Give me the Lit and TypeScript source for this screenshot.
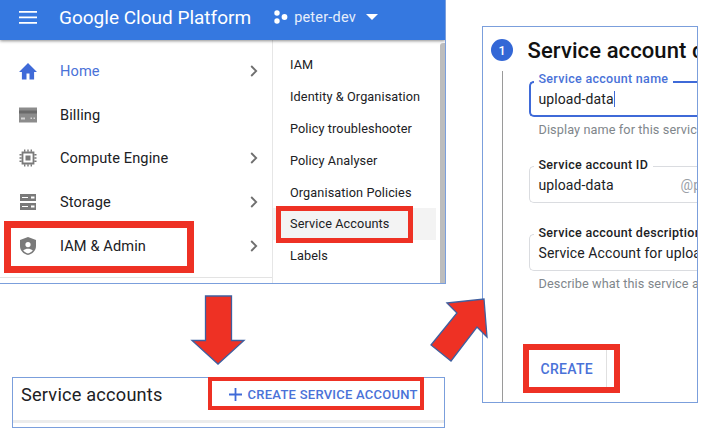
import { LitElement, html, css, svg } from 'lit';
import { customElement } from 'lit/decorators.js';

const GREY = '#7a7a7a';

const icons: Record<string, unknown> = {
  home: svg`<path fill="#3f6ad8" d="M7.500 17.500v-6h3v6h4.600v-7.500h2.900L9 1 0 10h2.900v7.500z"/>`,
  billing: svg`<path fill="#8c8c8c" d="M0 1.500h18v15H0z"/><path fill="#6a6a6a" d="M0 4.500h18v3H0z"/><path fill="#d4d4d4" d="M2 11.500h4v2H2zM11.500 11.500h1.500v1.500h-1.500zM14.500 11.500H16v1.500h-1.500z"/>`,
  compute: svg`<path fill="none" stroke="${GREY}" stroke-width="1.800" d="M3.500 3.500h11v11h-11z"/><path fill="${GREY}" d="M6.500 6.500h5v5h-5zM.5 5h2.200v1.400H.5zM.5 8.300h2.200v1.400H.5zM.5 11.600h2.200V13H.5zM15.300 5h2.200v1.400h-2.200zM15.300 8.300h2.200v1.400h-2.200zM15.300 11.600h2.200V13h-2.200zM5 .5h1.400v2.200H5zM8.300 .5h1.400v2.200H8.300zM11.600 .5H13v2.200h-1.400zM5 15.300h1.400v2.200H5zM8.300 15.300h1.400v2.200H8.300zM11.600 15.300H13v2.200h-1.400z"/>`,
  storage: svg`<path fill="${GREY}" fill-rule="evenodd" d="M1 1h16v7H1zM12 3.500v2h3.500v-2zM1 10h16v7H1zM12 12.500v2h3.500v-2zM3 4h6v1H3zM3 13h6v1H3z"/>`,
  iam: svg`<path fill="${GREY}" fill-rule="evenodd" d="M9 0l8 3v6c0 4.500-3.400 8-8 9-4.600-1-8-4.500-8-9V3zM9 5a2.600 2.600 0 1 0 0 5.200A2.600 2.600 0 0 0 9 5zM4.200 13.300C5.400 15 7 16 9 16.500c2-.5 3.600-1.500 4.800-3.200C12.500 12.200 10.800 11.700 9 11.700s-3.500.5-4.800 1.600z"/>`,
};

const menu = [
  { icon: 'home', label: 'Home', arrow: true, active: true },
  { icon: 'billing', label: 'Billing', arrow: false },
  { icon: 'compute', label: 'Compute Engine', arrow: true },
  { icon: 'storage', label: 'Storage', arrow: true },
  { icon: 'iam', label: 'IAM & Admin', arrow: true },
];

const submenu = [
  'IAM',
  'Identity & Organisation',
  'Policy troubleshooter',
  'Policy Analyser',
  'Organisation Policies',
  'Service Accounts',
  'Labels',
];

@customElement('app-root')
export class AppRoot extends LitElement {
  static styles = css`
    :host {
      display: block;
      position: relative;
      width: 703px;
      height: 432px;
      overflow: hidden;
      background: #fff;
      font-family: Roboto, 'Liberation Sans', sans-serif;
      color: #202124;
    }
    /* the figure is a free canvas: three screenshots with arrows and marks over them */
    .panel {
      position: absolute;
      box-sizing: border-box;
      background: #fff;
      overflow: hidden;
    }
    .console {
      left: 0;
      top: 0;
      width: 446px;
      height: 284px;
      border-right: 1.500px solid #7b9fdc;
      border-bottom: 1.500px solid #7b9fdc;
      display: flex;
      flex-direction: column;
    }
    .topbar {
      height: 40px;
      flex: none;
      box-sizing: border-box;
      background: #3578e0;
      color: #fff;
      display: flex;
      align-items: center;
      padding: 0 0 6px 19px;
      box-shadow: 0 1px 3px rgba(0, 0, 0, 0.45);
      position: relative;
    }
    .burger {
      width: 18px;
      height: 13px;
      flex: none;
    }
    .brand {
      margin-left: 22px;
      font-size: 19px;
      white-space: nowrap;
    }
    .dots {
      margin-left: 23px;
      flex: none;
    }
    .project {
      margin-left: 6px;
      font-size: 14.500px;
      letter-spacing: 0.2px;
      color: #e6eefb;
    }
    .caret {
      margin-left: 10px;
      width: 0;
      height: 0;
      border-left: 6px solid transparent;
      border-right: 6px solid transparent;
      border-top: 6px solid #fff;
    }
    .body {
      flex: 1;
      display: flex;
      min-height: 0;
    }
    .nav {
      width: 273px;
      flex: none;
      box-sizing: border-box;
      padding-top: 9px;
      border-right: 1px solid #e6e6e6;
    }
    .nav-row {
      height: 43.700px;
      display: flex;
      align-items: center;
      padding-left: 19px;
      font-size: 14.600px;
      letter-spacing: 0.1px;
    }
    .nav-row svg.ico {
      width: 18px;
      height: 18px;
      flex: none;
      margin-right: 23px;
    }
    .nav-row .label {
      flex: 1;
    }
    .nav-row.active {
      color: #4a72d8;
    }
    .chev {
      width: 8px;
      height: 12px;
      flex: none;
      margin-right: 14px;
    }
    .nav-rule {
      height: 1px;
      margin-top: 10px;
      background: #e3e3e3;
    }
    .sub {
      flex: 1;
      padding-top: 8.500px;
      position: relative;
    }
    .sub-row {
      height: 31.900px;
      display: flex;
      align-items: center;
      padding-left: 17px;
      font-size: 12.700px;
      letter-spacing: 0.1px;
      margin-right: 9px;
    }
    .sub-row.on {
      background: #f3f3f3;
    }
    .scroll {
      position: absolute;
      top: 3px;
      right: 0;
      bottom: 0;
      width: 5px;
      background: #bdbdbd;
      border-radius: 3px 0 0 0;
    }

    .form {
      left: 482px;
      top: 26px;
      width: 216px;
      height: 377px;
      border: 1.500px solid #7b9fdc;
      display: grid;
      grid-template-columns: 36.500px 1fr;
      padding: 12px 0 0 8px;
    }
    .step {
      display: flex;
      flex-direction: column;
      align-items: center;
      width: 22px;
    }
    .num {
      width: 22px;
      height: 22px;
      flex: none;
      border-radius: 50%;
      background: #3367d6;
      color: #fff;
      font-size: 12.500px;
      font-weight: 500;
      display: flex;
      align-items: center;
      justify-content: center;
    }
    .rail {
      flex: 1;
      width: 1px;
      margin-top: 10px;
      background: #9a9a9a;
    }
    .content {
      min-width: 0;
      white-space: nowrap;
    }
    h2 {
      margin: -1px 0 0;
      font-size: 22px;
      line-height: 25px;
      font-weight: 500;
      color: #111;
      letter-spacing: 0.1px;
    }
    .field {
      box-sizing: border-box;
      position: relative;
      margin-left: 1px;
      width: 200px;
      height: 37px;
      border: 1px solid #dadce0;
      border-right: none;
      border-radius: 5px 0 0 5px;
      padding: 8px 0 0 9px;
      font-size: 14px;
      line-height: 20px;
      letter-spacing: 0.1px;
    }
    .field.focus {
      border: 2px solid #3f6ad8;
      border-right: none;
      padding: 6px 0 0 8px;
      height: 36px;
    }
    .legend {
      position: absolute;
      left: 4px;
      top: -10.500px;
      padding: 0 5px;
      background: #fff;
      font-size: 12.500px;
      line-height: 15px;
      font-weight: 500;
      letter-spacing: 0.3px;
    }
    .field.focus .legend {
      left: 3px;
      color: #4a72d8;
      top: -11.500px;
    }
    .cursor {
      display: inline-block;
      width: 1px;
      height: 16px;
      background: #3f6ad8;
      vertical-align: -3px;
    }
    .suffix {
      position: absolute;
      left: 151px;
      top: 8px;
      color: #9aa0a6;
    }
    .hint {
      margin: 5px 0 0 11px;
      font-size: 12.700px;
      line-height: 15px;
      letter-spacing: 0.1px;
      color: #80868b;
    }
    .f1 {
      margin-top: 17.500px;
    }
    .f2 {
      margin-top: 29.500px;
    }
    .f3 {
      margin-top: 31px;
    }
    .create {
      margin-top: 57px;
      width: 79px;
      height: 41px;
      display: flex;
      align-items: center;
      padding-left: 13px;
      box-sizing: border-box;
      border-right: 1px solid #e0e0e0;
      color: #4a72d8;
      font-size: 14px;
      font-weight: 500;
      letter-spacing: 0.3px;
    }

    .list {
      left: 12px;
      top: 377px;
      width: 433px;
      height: 51px;
      border: 1.500px solid #7b9fdc;
    }
    .list-head {
      height: 33px;
      display: flex;
      align-items: center;
      padding-left: 8px;
      font-size: 18.200px;
      letter-spacing: 0.2px;
      color: #202124;
    }
    .action {
      display: flex;
      align-items: center;
      margin-left: 66px;
      color: #4a72d8;
      font-size: 13px;
      font-weight: 500;
      letter-spacing: 0.25px;
    }
    .action svg {
      width: 13px;
      height: 13px;
      margin-right: 6px;
    }
    .rule {
      height: 3px;
      margin-top: 8.500px;
      background: #ececec;
    }

    .arrows {
      position: absolute;
      left: 0;
      top: 0;
      pointer-events: none;
    }
    .mark {
      position: absolute;
      box-sizing: border-box;
      border-style: solid;
      border-color: #ee3124;
    }
    .mark-iam {
      left: 4px;
      top: 221px;
      width: 190px;
      height: 52px;
      border-width: 7px;
    }
    .mark-sa {
      left: 276px;
      top: 206px;
      width: 137px;
      height: 37px;
      border-width: 5px;
    }
    .mark-add {
      left: 208px;
      top: 377px;
      width: 216px;
      height: 33px;
      border-width: 4px;
    }
    .mark-create {
      left: 523px;
      top: 344px;
      width: 97px;
      height: 49px;
      border-width: 6px;
    }
  `;

  render() {
    return html`
      <section class="panel console">
        <header class="topbar">
          <svg class="burger" viewBox="0 0 18 13">
            <path fill="#fff" d="M0 0h18v1.800H0zM0 5.500h18v1.800H0zM0 11h18v1.800H0z" />
          </svg>
          <span class="brand">Google Cloud Platform</span>
          <svg class="dots" width="14" height="14" viewBox="0 0 14 14">
            <circle cx="3" cy="3" r="2.700" fill="#fff" />
            <circle cx="3" cy="11" r="2.700" fill="#fff" />
            <circle cx="10.500" cy="7" r="2.900" fill="#fff" />
          </svg>
          <span class="project">peter-dev</span>
          <span class="caret"></span>
        </header>
        <div class="body">
          <nav class="nav">
            ${menu.map(
              (m) => html`
                <div class="nav-row ${m.active ? 'active' : ''}">
                  <svg class="ico" viewBox="0 0 18 18">${icons[m.icon]}</svg>
                  <span class="label">${m.label}</span>
                  ${m.arrow
                    ? html`<svg class="chev" viewBox="0 0 8 12">
                        <path d="M1.200 1l5 5-5 5" fill="none" stroke="#6f6f6f" stroke-width="1.800" />
                      </svg>`
                    : ''}
                </div>
              `,
            )}
            <div class="nav-rule"></div>
          </nav>
          <div class="sub">
            ${submenu.map(
              (s) => html`<div class="sub-row ${s === 'Service Accounts' ? 'on' : ''}">${s}</div>`,
            )}
            <div class="scroll"></div>
          </div>
        </div>
      </section>

      <section class="panel form">
        <div class="step">
          <div class="num">1</div>
          <div class="rail"></div>
        </div>
        <div class="content">
          <h2>Service account d</h2>
          <div class="field focus f1">
            <span class="legend">Service account name</span>
            upload-data<span class="cursor"></span>
          </div>
          <div class="hint">Display name for this servic</div>
          <div class="field f2">
            <span class="legend">Service account ID</span>
            upload-data
            <span class="suffix">@p</span>
          </div>
          <div class="field f3">
            <span class="legend">Service account description</span>
            Service Account for uploa
          </div>
          <div class="hint">Describe what this service a</div>
          <div class="create">CREATE</div>
        </div>
      </section>

      <section class="panel list">
        <div class="list-head">
          <span>Service accounts</span>
          <span class="action">
            <svg viewBox="0 0 13 13"><path fill="#3f6ad8" d="M5.600 0h1.800v5.600H13v1.800H7.400V13H5.600V7.400H0V5.600h5.600z" /></svg>
            CREATE SERVICE ACCOUNT
          </span>
        </div>
        <div class="rule"></div>
      </section>

      <svg class="arrows" width="703" height="432" viewBox="0 0 703 432">
        <path
          d="M205.500 296h26v44.500h12.500L218 364l-26-23.500h13.500z"
          fill="#ee3124"
          stroke="#3f5f9f"
          stroke-width="1.300"
        />
        <path
          d="M447 303l37-4 3 38-10-10-26 34-20-16 26-32z"
          fill="#ee3124"
          stroke="#3f5f9f"
          stroke-width="1.300"
        />
      </svg>

      <div class="mark mark-iam"></div>
      <div class="mark mark-sa"></div>
      <div class="mark mark-add"></div>
      <div class="mark mark-create"></div>
    `;
  }
}
